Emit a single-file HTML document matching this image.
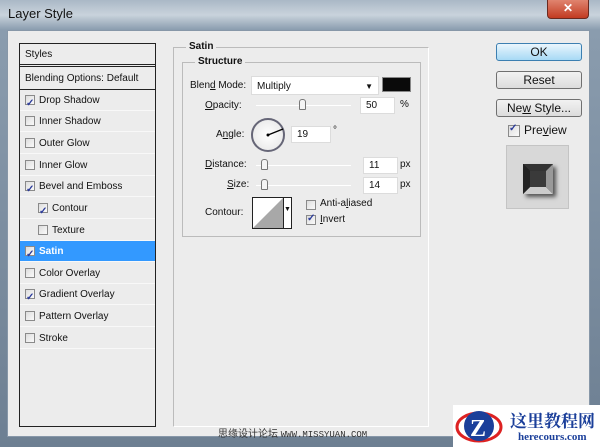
<!DOCTYPE html>
<html><head><meta charset="utf-8"><style>
*{margin:0;padding:0;box-sizing:border-box}
body{width:600px;height:447px;overflow:hidden;font-family:"Liberation Sans",sans-serif;font-size:10px;color:#111;position:relative;background:#5a6878}
.frame{position:absolute;left:0;top:0;width:600px;height:447px;background:linear-gradient(180deg,#aab8c6 0,#c9d3dc 15px,#8a9cae 30px,#6d7f92 100%)}
.title{position:absolute;left:8px;top:6px;font-size:13px;color:#111}
.close{position:absolute;left:547px;top:0;width:42px;height:19px;background:linear-gradient(#e0846f,#c23b22);border:1px solid #6a2a20;border-top:none;border-radius:0 0 4px 4px;color:#fff;font-weight:bold;text-align:center;font-size:12px;line-height:17px}
.client{position:absolute;left:7px;top:30px;width:583px;height:407px;background:#ececec;border:1px solid #8797a8}
.abs{position:absolute}
.list{position:absolute;left:19px;top:43px;width:137px;height:384px;border:1px solid #222;background:#ececec}
.row{position:absolute;left:0;width:135px;height:21px;line-height:21px;border-bottom:1px solid #f8f8f8;font-size:10px}
.cb{position:absolute;width:10px;height:10px;border:1px solid #8a8a8a;background:linear-gradient(135deg,#ddd,#fafafa)}
.cb.on::after{content:"✓";position:absolute;left:0;top:-3px;font-size:10px;color:#2a3a9a;font-weight:bold}
.inp{position:absolute;background:#fff;border:1px solid #dcdcdc;font-size:10px;line-height:16px;padding-left:5px}
.lbl{position:absolute;font-size:10px;text-align:right}
.track{position:absolute;height:1px;background:#aaa;border-bottom:1px solid #fff}
.thumb{position:absolute;width:7px;height:11px;border:1px solid #777;border-radius:3px 3px 1px 1px;background:#f4f4f4}
.btn{position:absolute;left:496px;width:86px;height:18px;border:1px solid #707070;border-radius:3px;background:linear-gradient(#f2f2f2,#dcdcdc);text-align:center;font-size:12px;line-height:16px}
</style></head><body>
<div class="frame"></div>
<div class="title">Layer Style</div>
<div class="close">✕</div>
<div class="client"></div>

<div class="list">
 <div class="row" style="top:0;height:23px;line-height:21px;padding-left:5px;border-bottom:3px double #222">Styles</div>
 <div class="row" style="top:24px;height:22px;padding-left:5px;border-bottom:1px solid #222">Blending Options: Default</div>
 <div class="row" style="top:46px;padding-left:19px"><span class="cb on" style="left:5px;top:5px"></span>Drop Shadow</div>
 <div class="row" style="top:67px;padding-left:19px"><span class="cb" style="left:5px;top:5px"></span>Inner Shadow</div>
 <div class="row" style="top:89px;padding-left:19px"><span class="cb" style="left:5px;top:5px"></span>Outer Glow</div>
 <div class="row" style="top:111px;padding-left:19px"><span class="cb" style="left:5px;top:5px"></span>Inner Glow</div>
 <div class="row" style="top:132px;padding-left:19px"><span class="cb on" style="left:5px;top:5px"></span>Bevel and Emboss</div>
 <div class="row" style="top:154px;padding-left:32px"><span class="cb on" style="left:18px;top:5px"></span>Contour</div>
 <div class="row" style="top:176px;padding-left:32px"><span class="cb" style="left:18px;top:5px"></span>Texture</div>
 <div class="row" style="top:197px;padding-left:19px;background:#3399ff;color:#fff;font-weight:bold"><span class="cb on" style="left:5px;top:5px"></span>Satin</div>
 <div class="row" style="top:219px;padding-left:19px"><span class="cb" style="left:5px;top:5px"></span>Color Overlay</div>
 <div class="row" style="top:240px;padding-left:19px"><span class="cb on" style="left:5px;top:5px"></span>Gradient Overlay</div>
 <div class="row" style="top:262px;padding-left:19px"><span class="cb" style="left:5px;top:5px"></span>Pattern Overlay</div>
 <div class="row" style="top:284px;padding-left:19px"><span class="cb" style="left:5px;top:5px"></span>Stroke</div>
</div>

<div class="abs" style="left:173px;top:47px;width:256px;height:380px;border:1px solid #bbb;border-right:1px solid #fff;border-bottom-color:#fff"></div>
<div class="abs" style="left:186px;top:41px;background:#ececec;padding:0 3px;font-weight:bold;font-size:10px">Satin</div>
<div class="abs" style="left:182px;top:62px;width:239px;height:175px;border:1px solid #bbb"></div>
<div class="abs" style="left:195px;top:56px;background:#ececec;padding:0 3px;font-weight:bold;font-size:10px">Structure</div>

<div class="lbl" style="left:190px;top:80px">Blen<u>d</u> Mode:</div>
<div class="inp" style="left:251px;top:76px;width:128px;height:19px;line-height:19px">Multiply<span style="position:absolute;right:5px;top:0;font-size:8px">▼</span></div>
<div class="abs" style="left:382px;top:77px;width:29px;height:15px;background:#0a0a0a;border:1px solid #888"></div>

<div class="lbl" style="left:205px;top:100px"><u>O</u>pacity:</div>
<div class="track" style="left:256px;top:105px;width:95px"></div>
<div class="thumb" style="left:299px;top:99px"></div>
<div class="inp" style="left:360px;top:97px;width:35px;height:17px">50</div>
<div class="lbl" style="left:400px;top:99px">%</div>

<div class="lbl" style="left:216px;top:129px">A<u>n</u>gle:</div>
<div class="abs" style="left:251px;top:118px;width:34px;height:34px;border:2px solid #667;border-radius:50%;background:radial-gradient(#fff,#e4e4e4)"></div>
<svg class="abs" style="left:251px;top:118px" width="34" height="34"><line x1="17" y1="17" x2="32" y2="11" stroke="#000" stroke-width="1.3"/><circle cx="17" cy="17" r="1.5"/></svg>
<div class="inp" style="left:291px;top:126px;width:40px;height:17px">19</div>
<div class="lbl" style="left:333px;top:125px">°</div>

<div class="lbl" style="left:205px;top:159px"><u>D</u>istance:</div>
<div class="track" style="left:256px;top:165px;width:95px"></div>
<div class="thumb" style="left:261px;top:159px"></div>
<div class="inp" style="left:363px;top:157px;width:35px;height:17px">11</div>
<div class="lbl" style="left:400px;top:159px">px</div>

<div class="lbl" style="left:227px;top:179px"><u>S</u>ize:</div>
<div class="track" style="left:256px;top:185px;width:95px"></div>
<div class="thumb" style="left:261px;top:179px"></div>
<div class="inp" style="left:363px;top:177px;width:35px;height:17px">14</div>
<div class="lbl" style="left:400px;top:179px">px</div>

<div class="lbl" style="left:205px;top:207px">Contour:</div>
<div class="abs" style="left:252px;top:197px;width:40px;height:32px;border:1px solid #222;background:#fff"></div>
<svg class="abs" style="left:253px;top:198px" width="30" height="30"><polygon points="0,30 30,0 30,30" fill="#a8a8a8"/></svg>
<div class="abs" style="left:283px;top:198px;width:8px;height:30px;border-left:1px solid #222;font-size:7px;text-align:center;line-height:24px">▼</div>
<span class="cb" style="left:306px;top:200px"></span><div class="lbl" style="left:320px;top:198px">Anti-a<u>l</u>iased</div>
<span class="cb on" style="left:306px;top:215px"></span><div class="lbl" style="left:320px;top:214px"><u>I</u>nvert</div>

<div class="btn" style="top:43px;border-color:#3c7fb1;background:linear-gradient(#eaf6fd,#a7d9f5)">OK</div>
<div class="btn" style="top:71px">Reset</div>
<div class="btn" style="top:99px">Ne<u>w</u> Style...</div>
<span class="cb on" style="left:508px;top:125px;width:12px;height:12px"></span>
<div class="abs" style="left:524px;top:123px;font-size:12px">Pre<u>v</u>iew</div>
<div class="abs" style="left:506px;top:145px;width:63px;height:64px;background:#d8d8d8;border:1px solid #c4c4c4"></div>
<div class="abs" style="left:523px;top:164px;width:30px;height:30px;background:#111;box-shadow:3px 3px 4px #555"></div>
<svg class="abs" style="left:523px;top:164px" width="30" height="30"><polygon points="0,0 30,0 23,7 7,7" fill="#333"/><polygon points="30,0 30,30 23,23 23,7" fill="#999"/><polygon points="0,30 30,30 23,23 7,23" fill="#ccc"/><polygon points="0,0 7,7 7,23 0,30" fill="#222"/><rect x="7" y="7" width="16" height="16" fill="#3a3a3a"/></svg>

<div class="abs" style="left:218px;top:425px;font-family:'Liberation Sans','Noto Sans CJK SC',sans-serif;font-size:10px;color:#333">思缘设计论坛 <span style="font-family:'Liberation Mono',monospace;font-size:9px">WWW.MISSYUAN.COM</span></div>
<div class="abs" style="left:453px;top:405px;width:147px;height:42px;background:#fff"></div>
<svg class="abs" style="left:455px;top:406px" width="50" height="41"><ellipse cx="24" cy="21" rx="22" ry="14" fill="none" stroke="#d22" stroke-width="3"/><circle cx="24" cy="20" r="15" fill="#1b3f9a"/><text x="15" y="30" font-family="Liberation Serif" font-weight="bold" font-size="24" fill="#fff">Z</text></svg>
<div class="abs" style="left:510px;top:407px;font-family:'Liberation Serif','Noto Serif CJK SC',serif;font-weight:bold;font-size:17px;color:#1b3f9a">这里教程网</div>
<div class="abs" style="left:518px;top:431px;font-family:'Liberation Serif',serif;font-weight:bold;font-size:11px;color:#1b3f9a">herecours.com</div>
</body></html>
